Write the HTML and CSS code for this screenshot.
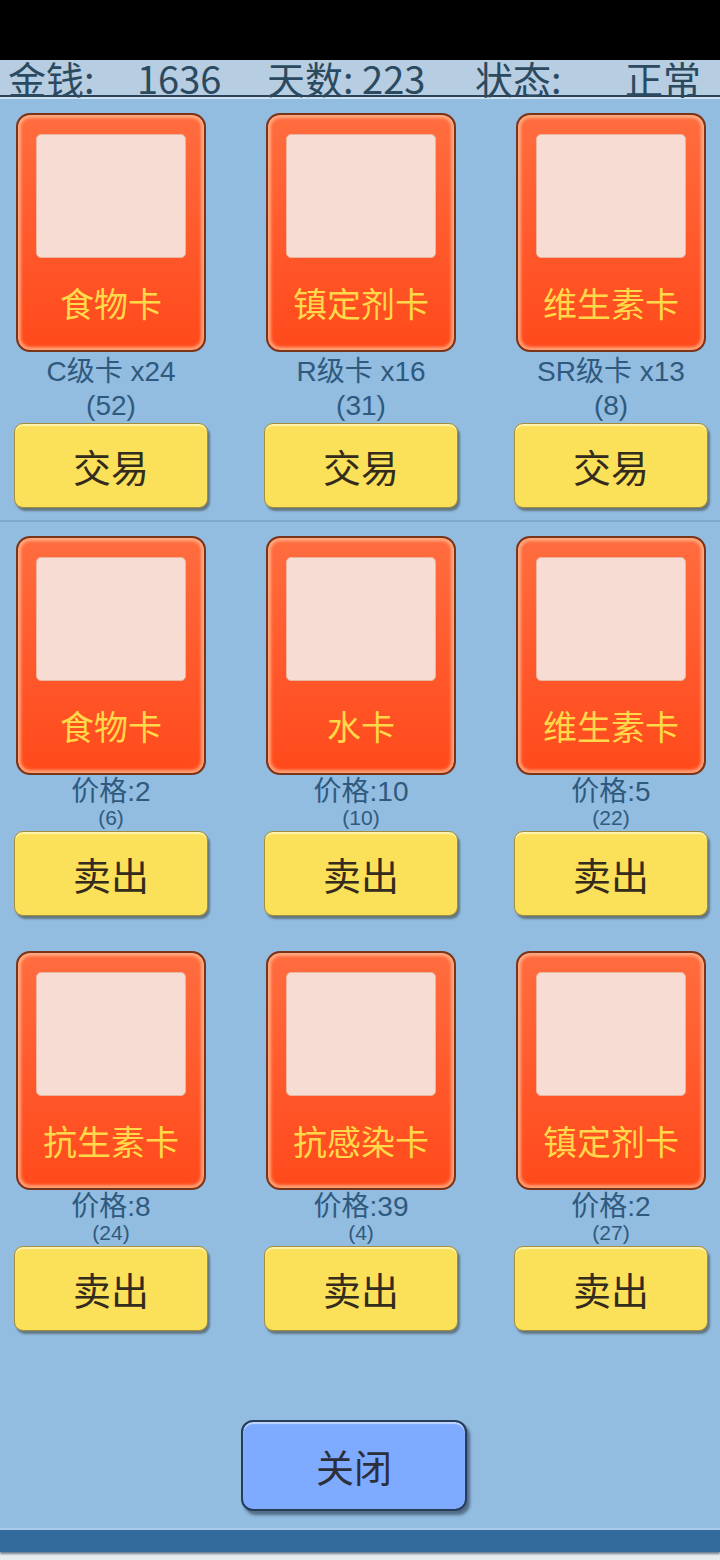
FILE: index.html
```html
<!DOCTYPE html>
<html lang="zh">

<head>
    <meta charset="UTF-8">
    <meta name="viewport" content="width=device-width, initial-scale=1.0">
    <title>卡牌交易</title>
    <link rel="stylesheet" href="styles.css">
</head>

<body>
    <div class="status-bar"></div>

    <div class="hud">
        <span>金钱:</span>
        <span>1636</span>
        <span>天数: 223</span>
        <span>状态:</span>
        <span>正常</span>
    </div>

    <main class="panel">
        <!-- 交易区 -->
        <section class="row row-trade">
            <div class="slot">
                <div class="card"><div class="art"></div><div class="label">食物卡</div></div>
                <div class="info">C级卡 x24<br>(52)</div>
                <button class="btn">交易</button>
            </div>
            <div class="slot">
                <div class="card"><div class="art"></div><div class="label">镇定剂卡</div></div>
                <div class="info">R级卡 x16<br>(31)</div>
                <button class="btn">交易</button>
            </div>
            <div class="slot">
                <div class="card"><div class="art"></div><div class="label">维生素卡</div></div>
                <div class="info">SR级卡 x13<br>(8)</div>
                <button class="btn">交易</button>
            </div>
        </section>

        <hr class="divider">

        <!-- 出售区 -->
        <section class="row row-sell">
            <div class="slot">
                <div class="card"><div class="art"></div><div class="label">食物卡</div></div>
                <div class="price">价格:2</div>
                <div class="stock">(6)</div>
                <button class="btn">卖出</button>
            </div>
            <div class="slot">
                <div class="card"><div class="art"></div><div class="label">水卡</div></div>
                <div class="price">价格:10</div>
                <div class="stock">(10)</div>
                <button class="btn">卖出</button>
            </div>
            <div class="slot">
                <div class="card"><div class="art"></div><div class="label">维生素卡</div></div>
                <div class="price">价格:5</div>
                <div class="stock">(22)</div>
                <button class="btn">卖出</button>
            </div>
        </section>

        <section class="row row-sell">
            <div class="slot">
                <div class="card"><div class="art"></div><div class="label">抗生素卡</div></div>
                <div class="price">价格:8</div>
                <div class="stock">(24)</div>
                <button class="btn">卖出</button>
            </div>
            <div class="slot">
                <div class="card"><div class="art"></div><div class="label">抗感染卡</div></div>
                <div class="price">价格:39</div>
                <div class="stock">(4)</div>
                <button class="btn">卖出</button>
            </div>
            <div class="slot">
                <div class="card"><div class="art"></div><div class="label">镇定剂卡</div></div>
                <div class="price">价格:2</div>
                <div class="stock">(27)</div>
                <button class="btn">卖出</button>
            </div>
        </section>

        <div class="footer">
            <button class="close">关闭</button>
        </div>
    </main>

    <div class="bottom-bar"></div>
</body>

</html>
```

FILE: styles.css
```css
/* 卡牌交易界面 */
body {
    font-family: 'Liberation Sans', 'Noto Sans CJK SC', sans-serif;
    background-color: #e7ecef;
    margin: 0;
    padding: 0;
    width: 720px;
    height: 1560px;
    overflow: hidden;
}

.status-bar {
    height: 60px;
    background-color: #000;
}

.hud {
    height: 35px;
    background-color: #b6cde2;
    border-bottom: 2px solid #2a4358;
    box-shadow: 0 2px 0 #cfe0ef;
    display: grid;
    grid-template-columns: 129px 130px 208px 150px auto;
    padding-left: 8px;
    font-family: 'Noto Sans CJK SC', sans-serif;
    font-size: 38px;
    line-height: 36px;
    color: #2b4a60;
    position: relative;
    z-index: 1;
}

.panel {
    background-color: #92bce0;
    height: 1431px;
    padding-top: 16px;
    box-sizing: border-box;
}

.row {
    display: grid;
    grid-template-columns: repeat(3, 194px);
    column-gap: 56px;
    padding-left: 14px;
}

.slot {
    display: flex;
    flex-direction: column;
    align-items: center;
}

.card {
    width: 190px;
    height: 239px;
    box-sizing: border-box;
    border: 2px solid #7a3519;
    border-radius: 14px;
    background: linear-gradient(#ff6d3f, #ff5326 70%, #ff4a1b);
    box-shadow: inset 0 0 3px 3px rgba(255, 190, 150, 0.75);
    padding: 19px 18px 0;
    display: flex;
    flex-direction: column;
}

.art {
    height: 124px;
    border: 1px solid #e9b4a0;
    border-radius: 5px;
    background-color: #f6dcd2;
    box-sizing: border-box;
}

.label {
    margin-top: 25px;
    line-height: 40px;
    font-size: 34px;
    text-align: center;
    white-space: nowrap;
    color: #ffd94a;
    font-family: 'Noto Sans CJK SC', sans-serif;
}

.info {
    margin-top: 3px;
    font-size: 28px;
    line-height: 34px;
    text-align: center;
    color: #2f5a7e;
}

.price {
    margin-top: 2px;
    font-size: 28px;
    line-height: 30px;
    color: #2f5a7e;
}

.stock {
    font-size: 21px;
    line-height: 22px;
    color: #2f5a7e;
}

.btn {
    width: 194px;
    height: 85px;
    border: 1px solid #a38c3b;
    border-radius: 9px;
    background-color: #fbe059;
    box-shadow: inset 0 2px 1px #fff3b0, 2px 3px 2px rgba(40, 40, 20, 0.45);
    font-family: 'Noto Sans CJK SC', sans-serif;
    font-size: 38px;
    color: #332c1c;
    padding: 0;
}

.row-sell .btn {
    margin-top: 2px;
}

.divider {
    border: none;
    height: 2px;
    background-color: #7fa8cb;
    margin: 12px 0 14px;
}

.row-sell + .row-sell {
    margin-top: 35px;
}

.footer {
    display: flex;
    justify-content: center;
    padding: 89px 12px 0 0;
}

.close {
    width: 226px;
    height: 91px;
    border: 2px solid #263c58;
    border-radius: 12px;
    background-color: #7eaaff;
    box-shadow: inset 0 2px 1px #c2d6ff, 3px 4px 3px rgba(20, 30, 50, 0.5);
    font-family: 'Noto Sans CJK SC', sans-serif;
    font-size: 38px;
    color: #2c2f3a;
    padding: 0;
}

.bottom-bar {
    height: 22px;
    background-color: #336a9c;
    border-top: 2px solid #a9cbea;
    box-shadow: 0 2px 2px rgba(30, 50, 80, 0.6);
}
```
